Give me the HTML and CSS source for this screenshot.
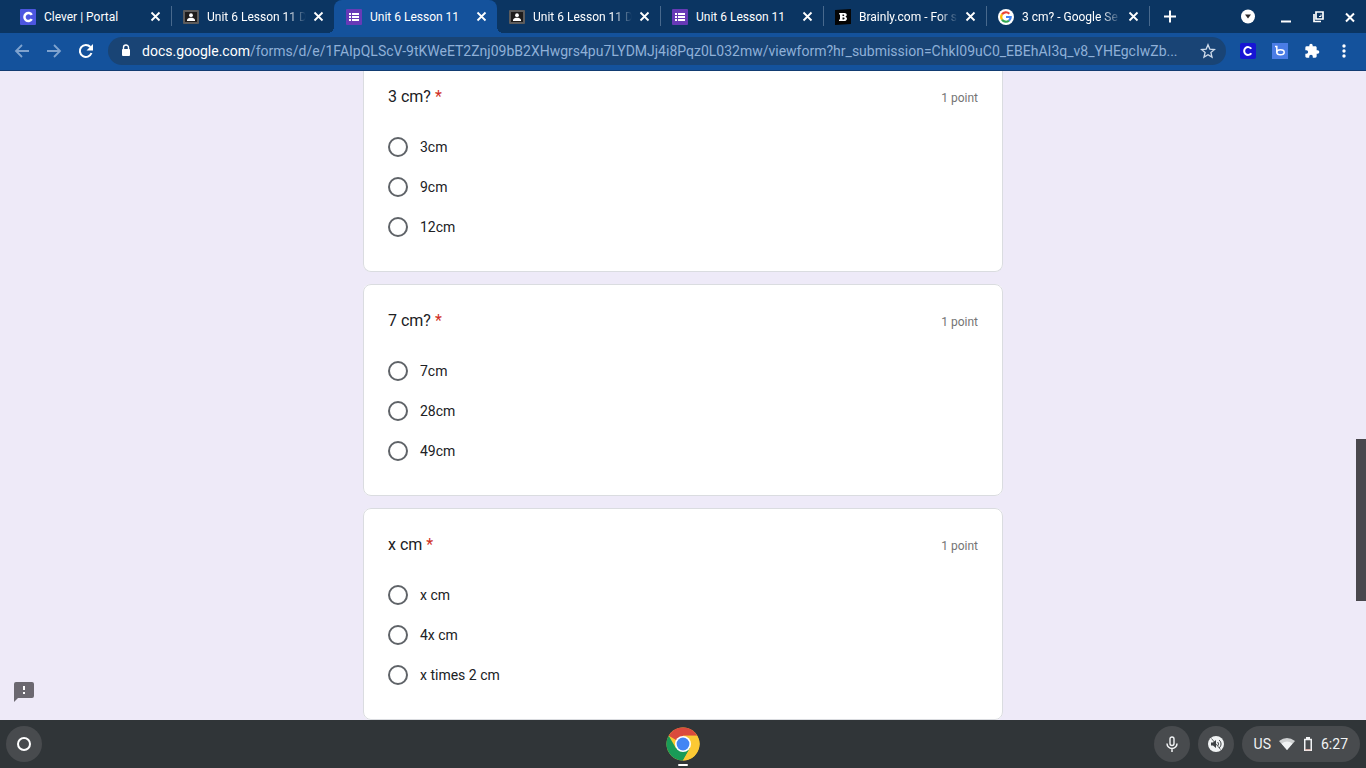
FILE: index.html
```html
<!DOCTYPE html>
<html lang="en">
<head>
<meta charset="utf-8">
<meta name="viewport" content="width=device-width, initial-scale=1">
<title>Unit 6 Lesson 11</title>
<link rel="stylesheet" href="styles.css">
</head>
<body>
<svg class="symbols" aria-hidden="true">
  <symbol id="close" viewBox="0 0 16 16"><path d="M4.500 3.500l8 8M12.500 3.500l-8 8" stroke="currentColor" stroke-width="1.800" fill="none"/></symbol>
  <symbol id="classroom" viewBox="0 0 16 16"><rect y="1" width="16" height="14" rx="1" fill="#5d5c5c"/><rect x="2" y="3" width="12" height="10" fill="#1e1c1c"/><circle cx="8" cy="6.200" r="1.900" fill="#fff"/><path d="M4 12v-1c0-1.600 2.500-2.200 4-2.200s4 .6 4 2.200v1z" fill="#fff"/></symbol>
  <symbol id="forms" viewBox="0 0 16 16"><rect width="16" height="16" rx="1" fill="#673ab7"/><path d="M3 4h2v2H3zM6 4h7v2H6zM3 7h2v2H3zM6 7h7v2H6zM3 10h2v2H3zM6 10h7v2H6z" fill="#fff"/></symbol>
</svg>
<header class="browser">
  <nav class="tabs" aria-label="Tabs">
    <div class="tab"><svg class="favicon" viewBox="0 0 16 16"><rect width="16" height="16" rx="1" fill="#4c56e0"/><path d="M11.800 5.900A4 4 0 1 0 11.800 10.200" fill="none" stroke="#fff" stroke-width="2.500"/></svg><a class="tab-title" href="#">Clever | Portal</a><button class="close" aria-label="Close tab"><svg><use href="#close"/></svg></button></div>
    <div class="tab before-active"><svg class="favicon"><use href="#classroom"/></svg><a class="tab-title long" href="#">Unit 6 Lesson 11 D</a><button class="close" aria-label="Close tab"><svg><use href="#close"/></svg></button></div>
    <div class="tab active"><svg class="favicon"><use href="#forms"/></svg><a class="tab-title" href="#" aria-current="page">Unit 6 Lesson 11</a><button class="close" aria-label="Close tab"><svg><use href="#close"/></svg></button></div>
    <div class="tab"><svg class="favicon"><use href="#classroom"/></svg><a class="tab-title long" href="#">Unit 6 Lesson 11 D</a><button class="close" aria-label="Close tab"><svg><use href="#close"/></svg></button></div>
    <div class="tab"><svg class="favicon"><use href="#forms"/></svg><a class="tab-title" href="#">Unit 6 Lesson 11</a><button class="close" aria-label="Close tab"><svg><use href="#close"/></svg></button></div>
    <div class="tab"><svg class="favicon" viewBox="0 0 16 16"><path d="M0 1l16-1v15L0 16z" fill="#050505"/><path d="M5 4h4.500c2.700 0 3 3 .9 3.700C13 8.400 12.300 12 9.300 12H4v-1.500h1v-5H4.200V4zM7.500 5.600v1.500h1c1 0 1-1.500 0-1.500zm0 2.900v1.900h1.200c1.200 0 1.200-1.900 0-1.900z" fill="#fff" fill-rule="evenodd"/></svg><a class="tab-title long" href="#">Brainly.com - For s</a><button class="close" aria-label="Close tab"><svg><use href="#close"/></svg></button></div>
    <div class="tab"><svg class="favicon" viewBox="0 0 16 16"><circle cx="8" cy="8" r="8" fill="#fff"/><g fill="none" stroke-width="2.200"><path d="M4 5.400A4.700 4.700 0 0 1 11.300 4.700" stroke="#ea4335"/><path d="M4 5.400a4.700 4.700 0 0 0 0 5.200" stroke="#fbbc05"/><path d="M4 10.600a4.700 4.700 0 0 0 7 1" stroke="#34a853"/><path d="M8 8h4.700a4.700 4.700 0 0 1-1.700 3.600" stroke="#4285f4"/></g></svg><a class="tab-title long" href="#">3 cm? - Google Se</a><button class="close" aria-label="Close tab"><svg><use href="#close"/></svg></button></div>
    <button class="new-tab" aria-label="New tab"><svg viewBox="0 0 16 16"><path d="M8 1.500v12M2 7.500h12" stroke="currentColor" stroke-width="2"/></svg></button>
    <div class="window-controls">
      <button class="search-tabs" aria-label="Search tabs"><svg viewBox="0 0 16 16"><circle cx="8" cy="7.500" r="7" fill="#fff"/><path d="M5 5.500h6l-3 4z" fill="#2c2a2c"/></svg></button>
      <button aria-label="Minimize"><svg viewBox="0 0 16 16"><path d="M3 12.500h10" stroke="currentColor" stroke-width="2"/></svg></button>
      <button aria-label="Restore"><svg viewBox="0 0 16 16"><path d="M6 3h7v7H6zM4 5v7.500h7" fill="none" stroke="currentColor" stroke-width="1.700"/><path d="M9 7.500h2v-2" fill="none" stroke="currentColor"/></svg></button>
      <button aria-label="Close window"><svg viewBox="0 0 16 16"><path d="M4 4.500l8 8M12 4.500l-8 8" stroke="currentColor" stroke-width="2"/></svg></button>
    </div>
  </nav>
  <div class="toolbar">
    <div class="history">
      <button class="dim" aria-label="Back"><svg viewBox="0 0 16 16"><path d="M15 8H2M8 2L2 8l6 6" fill="none" stroke="currentColor" stroke-width="1.800"/></svg></button>
      <button class="dim" aria-label="Forward"><svg viewBox="0 0 16 16"><path d="M1 8h13M8 2l6 6-6 6" fill="none" stroke="currentColor" stroke-width="1.800"/></svg></button>
      <button aria-label="Reload"><svg viewBox="0 0 16 16"><path d="M13.500 10A6 6 0 1 1 12.400 4" fill="none" stroke="currentColor" stroke-width="2"/><path d="M15 1v6.500H8.500z" fill="currentColor"/></svg></button>
    </div>
    <div class="address">
      <svg class="lock" viewBox="0 0 16 16"><path d="M5.500 7V4.500a2.500 2.500 0 0 1 5 0V7" fill="none" stroke="currentColor" stroke-width="1.400"/><rect x="4" y="6" width="8" height="7" rx="1" fill="currentColor"/></svg>
      <a class="url" href="#"><span class="host">docs.google.com</span>/forms/d/e/1FAIpQLScV-9tKWeET2Znj09bB2XHwgrs4pu7LYDMJj4i8Pqz0L032mw/viewform?hr_submission=ChkI09uC0_EBEhAI3q_v8_YHEgcIwZb...</a>
      <button class="star" aria-label="Bookmark this page"><svg viewBox="0 0 16 16"><path d="M8 1.800l1.800 4.300 4.700.4-3.600 3 1.100 4.600L8 11.700l-4 2.400 1.100-4.600-3.600-3 4.700-.4z" fill="none" stroke="currentColor" stroke-width="1.300"/></svg></button>
    </div>
    <div class="extensions">
      <button aria-label="Clever"><svg viewBox="0 0 16 16"><rect width="16" height="16" rx="2" fill="#1715d4"/><path d="M11.300 5.800A3.900 3.900 0 1 0 11.300 10.200" fill="none" stroke="#fff" stroke-width="2"/></svg></button>
      <button aria-label="Brainly"><svg viewBox="0 0 16 16"><rect width="16" height="16" fill="#4a7de6"/><path d="M3 3.500h1.800V9.500" fill="none" stroke="#fff" stroke-width="1.500"/><ellipse cx="8.500" cy="9.300" rx="3.700" ry="2.500" fill="none" stroke="#fff" stroke-width="1.500"/></svg></button>
      <button aria-label="Extensions"><svg viewBox="0 0 24 24"><path d="M20.500 11H19V7c0-1.100-.9-2-2-2h-4V3.500a2.500 2.500 0 0 0-5 0V5H4a2 2 0 0 0-2 2v3.800h1.500a2.700 2.700 0 0 1 0 5.400H2V20c0 1.100.9 2 2 2h3.800v-1.500a2.700 2.700 0 0 1 5.400 0V22H17c1.100 0 2-.9 2-2v-4h1.500a2.500 2.500 0 0 0 0-5z" fill="currentColor"/></svg></button>
      <button aria-label="Menu"><svg viewBox="0 0 16 16"><circle cx="8" cy="3" r="1.700" fill="currentColor"/><circle cx="8" cy="8" r="1.700" fill="currentColor"/><circle cx="8" cy="13" r="1.700" fill="currentColor"/></svg></button>
    </div>
  </div>
</header>
<main class="page">
  <form class="form">
    <fieldset class="card continued" aria-labelledby="q1">
      <div class="question"><h2 id="q1">3 cm? <span class="required">*</span></h2><span class="points">1 point</span></div>
      <div class="options">
        <label><input type="radio" name="q1">3cm</label>
        <label><input type="radio" name="q1">9cm</label>
        <label><input type="radio" name="q1">12cm</label>
      </div>
    </fieldset>
    <fieldset class="card" aria-labelledby="q2">
      <div class="question"><h2 id="q2">7 cm? <span class="required">*</span></h2><span class="points">1 point</span></div>
      <div class="options">
        <label><input type="radio" name="q2">7cm</label>
        <label><input type="radio" name="q2">28cm</label>
        <label><input type="radio" name="q2">49cm</label>
      </div>
    </fieldset>
    <fieldset class="card" aria-labelledby="q3">
      <div class="question"><h2 id="q3">x cm <span class="required">*</span></h2><span class="points">1 point</span></div>
      <div class="options">
        <label><input type="radio" name="q3">x cm</label>
        <label><input type="radio" name="q3">4x cm</label>
        <label><input type="radio" name="q3">x times 2 cm</label>
      </div>
    </fieldset>
  </form>
  <button class="report" aria-label="Report a problem"><svg viewBox="0 0 20 20"><path d="M2 0h16a2 2 0 0 1 2 2v12a2 2 0 0 1-2 2H4l-4 4V2a2 2 0 0 1 2-2z" fill="#6b6870"/><path d="M9 4h2v4H9zM9 10h2v2H9z" fill="#fff"/></svg></button>
  <div class="scroll-thumb"></div>
</main>
<footer class="shelf">
  <button class="round" aria-label="Launcher"><svg viewBox="0 0 16 16"><circle cx="8" cy="8" r="6" fill="none" stroke="#fff" stroke-width="2"/></svg></button>
  <button class="app" aria-label="Chrome"><svg viewBox="0 0 34 34"><circle cx="17" cy="17" r="16.500" fill="#fbc934"/><path d="M17 17L2.700 8.750A16.500 16.500 0 0 1 31.300 8.750H17z" fill="#da4a3d"/><path d="M2.700 8.750A16.500 16.500 0 0 0 17 33.500L24.100 21.100 17 17 9.900 21.100z" fill="#199b57"/><path d="M17 8.750h14.300A16.500 16.500 0 0 1 17 33.500l7.100-12.400z" fill="#fbc934"/><circle cx="17" cy="17" r="8" fill="#fff"/><circle cx="17" cy="17" r="6.400" fill="#4285f4"/></svg><span class="running"></span></button>
  <div class="status">
    <button class="round" aria-label="Dictation"><svg viewBox="0 0 16 16"><rect x="6" y="1" width="4" height="8.500" rx="2" fill="none" stroke="currentColor" stroke-width="1.400"/><path d="M3 7.500a5 5 0 0 0 10 0M8 12.500V16" fill="none" stroke="currentColor" stroke-width="1.500"/></svg></button>
    <button class="round" aria-label="Select to speak"><svg viewBox="0 0 16 16"><circle cx="8" cy="8" r="8" fill="#f1f3f4"/><path d="M3 6.500h2L8 4v8L5 9.500H3z" fill="#3c4043"/><path d="M9.500 6c1.300 1 1.300 3 0 4M11 4c2.700 2 2.700 6 0 8" fill="none" stroke="#3c4043"/><path d="M3.500 2.500l9 11" stroke="#3c4043" stroke-width=".8"/></svg></button>
    <button class="tray"><span>US</span>
      <svg viewBox="0 0 16 16"><path d="M0 5q8-6 16 0L8 14z" fill="currentColor" fill-opacity=".8"/><path d="M2.500 7.500q5.500-4 11 0L8 14z" fill="currentColor"/></svg>
      <svg class="battery" viewBox="3 0 10 16"><path d="M4.750 3.500h6.500v10.750h-6.500z" fill="none" stroke="currentColor" stroke-width="1.500"/><path d="M6 1h4v2.500H6z" fill="currentColor"/><path d="M5 13.750h6" stroke="#e9b0a4"/></svg>
      <time>6:27</time></button>
  </div>
</footer>
</body>
</html>
```
FILE: styles.css
```css
* { box-sizing: border-box; }

body {
  display: flex;
  flex-direction: column;
  height: 100vh;
  margin: 0;
  overflow: hidden;
  background: #eeeaf8;
  color: #202124;
  font: 14px/20px Roboto, sans-serif;
}

button {
  display: flex;
  align-items: center;
  justify-content: center;
  padding: 0;
  border: 0;
  background: none;
  color: inherit;
  font: inherit;
}

a { color: inherit; text-decoration: none; }
svg { display: block; flex: none; width: 16px; height: 16px; }
.symbols { position: absolute; width: 0; height: 0; }

/* Browser frame */
.browser { background: #14529c; color: #fff; border-bottom: 1px solid #123c72; }

.tabs {
  display: flex;
  height: 33px;
  padding-left: 8px;
  background: #0b3562;
}

.tab {
  position: relative;
  display: flex;
  flex: 0 1 163px;
  align-items: center;
  gap: 4px;
  min-width: 0;
  padding: 0 8px 0 12px;
  font-size: 12px;
}

.tab::after {
  content: "";
  position: absolute;
  top: 6px;
  right: -1px;
  width: 1px;
  height: 20px;
  background: #48698d;
}

.tab.active { background: #14529c; border-radius: 8px 8px 0 0; }
.tab.active::after, .tab.before-active::after { display: none; }

/* Curved feet of the active tab */
.tab.active::before {
  content: "";
  position: absolute;
  right: -6px;
  bottom: 0;
  left: -6px;
  height: 6px;
  background:
    radial-gradient(circle at 0 0, transparent 6px, #14529c 6px) left / 6px 6px no-repeat,
    radial-gradient(circle at 100% 0, transparent 6px, #14529c 6px) right / 6px 6px no-repeat;
}

.favicon { margin-right: 4px; }

.tab-title {
  flex: 1;
  min-width: 0;
  overflow: hidden;
  white-space: nowrap;
}

.tab-title.long { mask-image: linear-gradient(to right, #000 80%, transparent); }

.new-tab { width: 42px; }
.window-controls { display: flex; gap: 16px; margin-left: auto; padding-right: 8px; }
.search-tabs { margin-right: 6px; }

.toolbar { display: flex; align-items: center; height: 37px; padding: 0 14px 1px; }
.history { display: flex; gap: 16px; margin-right: 14px; }
.dim { color: #7fa3cf; }

.address {
  display: flex;
  flex: 1;
  align-items: center;
  min-width: 0;
  height: 28px;
  padding: 0 10px;
  border-radius: 14px;
  background: #194475;
}

.url {
  flex: 1;
  min-width: 0;
  margin-left: 8px;
  overflow: hidden;
  color: #8fb0d8;
  white-space: nowrap;
}

.host { color: #fff; }
.star { color: #d0dceb; }
.extensions { display: flex; gap: 16px; margin-left: 14px; }

/* Form */
.page { position: relative; flex: 1; min-height: 0; overflow: hidden; }

.form {
  display: flex;
  flex-direction: column;
  gap: 12px;
  max-width: 640px;
  margin: 0 auto;
}

.card {
  min-width: 0;
  margin: 0;
  padding: 24px 24px 32px;
  border: 1px solid #dadce0;
  border-radius: 8px;
  background: #fff;
}

.card.continued { padding-top: 14px; border-top: 0; border-radius: 0 0 8px 8px; }

.question { display: flex; justify-content: space-between; gap: 16px; margin-bottom: 24px; }
.question h2 { margin: 0; font-size: 16px; font-weight: 400; line-height: 24px; }
.required { color: #d03025; }
.points { color: #757575; font-size: 12px; line-height: 26px; }

.options { display: flex; flex-direction: column; gap: 16px; }
.options label { display: flex; align-items: center; gap: 12px; line-height: 24px; }

.options input {
  appearance: none;
  width: 20px;
  height: 20px;
  margin: 0;
  border: 2px solid #5f6368;
  border-radius: 50%;
}

.options input:checked { box-shadow: inset 0 0 0 3px #fff; background: #673ab7; }

.report { position: absolute; bottom: 18px; left: 14px; }
.report svg { width: 20px; height: 20px; }

.scroll-thumb {
  position: absolute;
  top: 368px;
  right: 0;
  width: 10px;
  height: 162px;
  background: #49474d;
}

/* Shelf */
.shelf {
  display: grid;
  grid-template-columns: 1fr auto 1fr;
  align-items: center;
  height: 48px;
  padding: 0 6px;
  background: #303538;
  color: #f1f3f4;
}

.round { width: 36px; height: 36px; border-radius: 50%; background: #484b4e; }
.app { position: relative; height: 48px; }
.app svg { width: 34px; height: 34px; }

.running {
  position: absolute;
  bottom: 2px;
  width: 10px;
  height: 2px;
  border-radius: 1px;
  background: #fff;
}

.status { display: flex; gap: 8px; justify-self: end; }

.tray {
  gap: 8px;
  height: 36px;
  padding: 0 12px;
  border-radius: 18px;
  background: #484b4e;
}

.battery { width: 10px; }
```
